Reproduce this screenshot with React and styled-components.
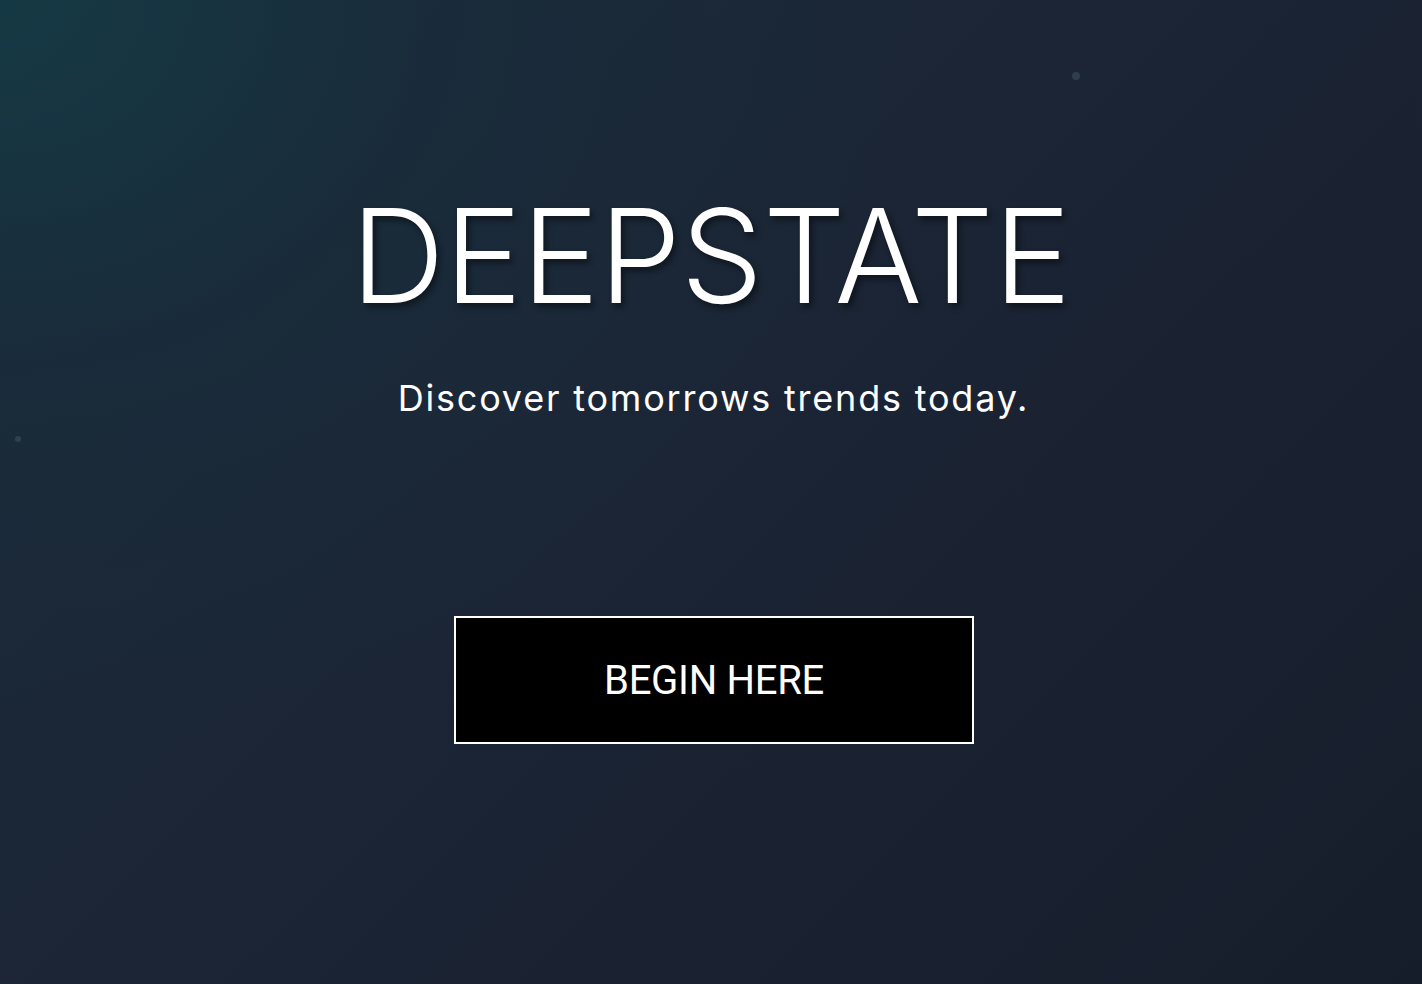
import React from 'react'
import styled, { createGlobalStyle } from 'styled-components'

const GlobalStyle = createGlobalStyle`
  html, body {
    margin: 0;
    padding: 0;
    height: 100%;
  }
  body {
    font-family: Inter, "Noto Sans", sans-serif;
    background: #1a2232;
  }
`

const Hero = styled.div`
  position: relative;
  width: 100%;
  height: 984px;
  overflow: hidden;
  background:
    radial-gradient(ellipse 1100px 900px at 0% 0%, rgba(20, 60, 70, 0.85) 0%, rgba(24, 46, 60, 0.5) 40%, rgba(27, 34, 50, 0) 85%),
    linear-gradient(135deg, #1b2b3b 0%, #1b2535 45%, #1a2131 70%, #161d2a 100%);
  display: flex;
  flex-direction: column;
  align-items: center;
`

const Title = styled.h1`
  margin: 191px 0 0;
  font-family: Inter, sans-serif;
  font-weight: 300;
  font-size: 130px;
  line-height: 130px;
  letter-spacing: 0;
  color: #fff;
  text-shadow: 3px 4px 6px rgba(0, 0, 0, 0.45);
`

const Subtitle = styled.p`
  margin: 55px 0 0 5px;
  font-family: Inter, sans-serif;
  font-weight: 400;
  font-size: 36px;
  line-height: 44px;
  letter-spacing: 1.8px;
  color: #fff;
`

const StartButton = styled.button`
  margin: 196px 0 0 6px;
  width: 520px;
  height: 128px;
  background: #000;
  border: 2px solid #fff;
  color: #fff;
  font-family: Roboto, Inter, sans-serif;
  font-weight: 400;
  font-size: 40px;
  letter-spacing: -0.3px;
  cursor: pointer;
`

const Particle = styled.span`
  position: absolute;
  border-radius: 50%;
  background: rgba(70, 90, 110, 0.45);
  width: ${p => p.size}px;
  height: ${p => p.size}px;
  left: ${p => p.x}px;
  top: ${p => p.y}px;
`

export default function App() {
  return (
    <>
      <GlobalStyle />
      <Hero>
        <Particle x={1072} y={72} size={8} />
        <Particle x={15} y={436} size={6} />
        <Title>DEEPSTATE</Title>
        <Subtitle>Discover tomorrows trends today.</Subtitle>
        <StartButton>BEGIN HERE</StartButton>
      </Hero>
    </>
  )
}
